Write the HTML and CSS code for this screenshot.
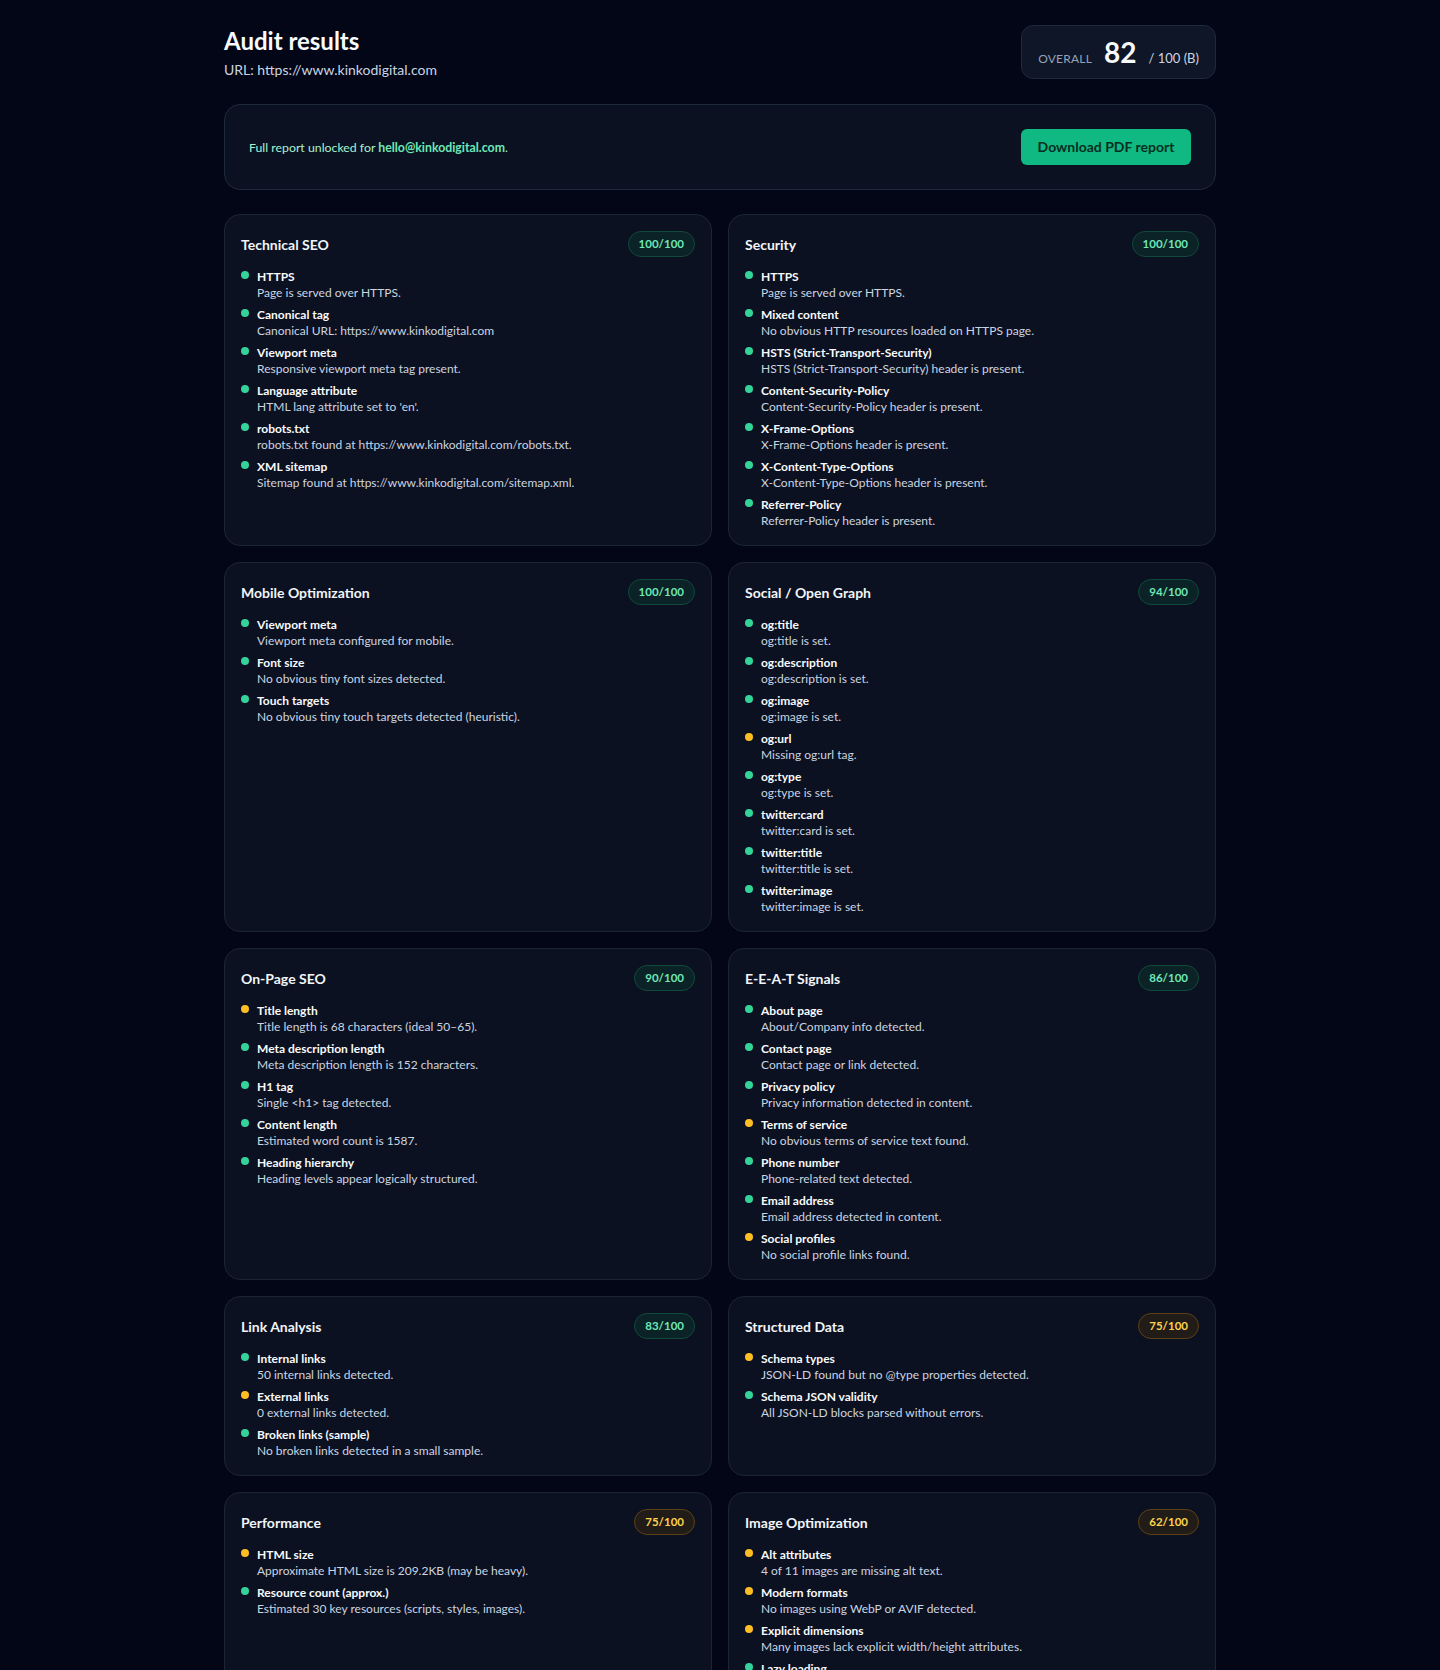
FILE: index.html
```html
<!DOCTYPE html>
<html lang="en">
<head>
<meta charset="utf-8">
<title>Audit results</title>
<link rel="stylesheet" href="styles.css">
</head>
<body>
<div class="page">
  <header class="top">
    <div class="top-text">
      <h1 class="h1">Audit results</h1>
      <p class="url">URL: https://www.kinkodigital.com</p>
    </div>
    <div class="overall">
      <span class="ov-label">OVERALL</span>
      <span class="ov-score">82</span>
      <span class="ov-max">/ 100 (B)</span>
    </div>
  </header>

  <section class="unlock">
    <p class="unlock-text">Full report unlocked for <strong class="unlock-email">hello@kinkodigital.com</strong>.</p>
    <button class="btn">Download PDF report</button>
  </section>

  <main class="grid">
    <article class="card">
      <div class="card-head"><h2 class="card-title">Technical SEO</h2><span class="badge good">100/100</span></div>
      <ul class="checks">
        <li class="check"><span class="dot ok"></span><div><div class="c-title">HTTPS</div><div class="c-desc">Page is served over HTTPS.</div></div></li>
        <li class="check"><span class="dot ok"></span><div><div class="c-title">Canonical tag</div><div class="c-desc">Canonical URL: https://www.kinkodigital.com</div></div></li>
        <li class="check"><span class="dot ok"></span><div><div class="c-title">Viewport meta</div><div class="c-desc">Responsive viewport meta tag present.</div></div></li>
        <li class="check"><span class="dot ok"></span><div><div class="c-title">Language attribute</div><div class="c-desc">HTML lang attribute set to 'en'.</div></div></li>
        <li class="check"><span class="dot ok"></span><div><div class="c-title">robots.txt</div><div class="c-desc">robots.txt found at https://www.kinkodigital.com/robots.txt.</div></div></li>
        <li class="check"><span class="dot ok"></span><div><div class="c-title">XML sitemap</div><div class="c-desc">Sitemap found at https://www.kinkodigital.com/sitemap.xml.</div></div></li>
      </ul>
    </article>

    <article class="card">
      <div class="card-head"><h2 class="card-title">Security</h2><span class="badge good">100/100</span></div>
      <ul class="checks">
        <li class="check"><span class="dot ok"></span><div><div class="c-title">HTTPS</div><div class="c-desc">Page is served over HTTPS.</div></div></li>
        <li class="check"><span class="dot ok"></span><div><div class="c-title">Mixed content</div><div class="c-desc">No obvious HTTP resources loaded on HTTPS page.</div></div></li>
        <li class="check"><span class="dot ok"></span><div><div class="c-title">HSTS (Strict-Transport-Security)</div><div class="c-desc">HSTS (Strict-Transport-Security) header is present.</div></div></li>
        <li class="check"><span class="dot ok"></span><div><div class="c-title">Content-Security-Policy</div><div class="c-desc">Content-Security-Policy header is present.</div></div></li>
        <li class="check"><span class="dot ok"></span><div><div class="c-title">X-Frame-Options</div><div class="c-desc">X-Frame-Options header is present.</div></div></li>
        <li class="check"><span class="dot ok"></span><div><div class="c-title">X-Content-Type-Options</div><div class="c-desc">X-Content-Type-Options header is present.</div></div></li>
        <li class="check"><span class="dot ok"></span><div><div class="c-title">Referrer-Policy</div><div class="c-desc">Referrer-Policy header is present.</div></div></li>
      </ul>
    </article>

    <article class="card">
      <div class="card-head"><h2 class="card-title">Mobile Optimization</h2><span class="badge good">100/100</span></div>
      <ul class="checks">
        <li class="check"><span class="dot ok"></span><div><div class="c-title">Viewport meta</div><div class="c-desc">Viewport meta configured for mobile.</div></div></li>
        <li class="check"><span class="dot ok"></span><div><div class="c-title">Font size</div><div class="c-desc">No obvious tiny font sizes detected.</div></div></li>
        <li class="check"><span class="dot ok"></span><div><div class="c-title">Touch targets</div><div class="c-desc">No obvious tiny touch targets detected (heuristic).</div></div></li>
      </ul>
    </article>

    <article class="card">
      <div class="card-head"><h2 class="card-title">Social / Open Graph</h2><span class="badge good">94/100</span></div>
      <ul class="checks">
        <li class="check"><span class="dot ok"></span><div><div class="c-title">og:title</div><div class="c-desc">og:title is set.</div></div></li>
        <li class="check"><span class="dot ok"></span><div><div class="c-title">og:description</div><div class="c-desc">og:description is set.</div></div></li>
        <li class="check"><span class="dot ok"></span><div><div class="c-title">og:image</div><div class="c-desc">og:image is set.</div></div></li>
        <li class="check"><span class="dot warn"></span><div><div class="c-title">og:url</div><div class="c-desc">Missing og:url tag.</div></div></li>
        <li class="check"><span class="dot ok"></span><div><div class="c-title">og:type</div><div class="c-desc">og:type is set.</div></div></li>
        <li class="check"><span class="dot ok"></span><div><div class="c-title">twitter:card</div><div class="c-desc">twitter:card is set.</div></div></li>
        <li class="check"><span class="dot ok"></span><div><div class="c-title">twitter:title</div><div class="c-desc">twitter:title is set.</div></div></li>
        <li class="check"><span class="dot ok"></span><div><div class="c-title">twitter:image</div><div class="c-desc">twitter:image is set.</div></div></li>
      </ul>
    </article>

    <article class="card">
      <div class="card-head"><h2 class="card-title">On-Page SEO</h2><span class="badge good">90/100</span></div>
      <ul class="checks">
        <li class="check"><span class="dot warn"></span><div><div class="c-title">Title length</div><div class="c-desc">Title length is 68 characters (ideal 50–65).</div></div></li>
        <li class="check"><span class="dot ok"></span><div><div class="c-title">Meta description length</div><div class="c-desc">Meta description length is 152 characters.</div></div></li>
        <li class="check"><span class="dot ok"></span><div><div class="c-title">H1 tag</div><div class="c-desc">Single &lt;h1&gt; tag detected.</div></div></li>
        <li class="check"><span class="dot ok"></span><div><div class="c-title">Content length</div><div class="c-desc">Estimated word count is 1587.</div></div></li>
        <li class="check"><span class="dot ok"></span><div><div class="c-title">Heading hierarchy</div><div class="c-desc">Heading levels appear logically structured.</div></div></li>
      </ul>
    </article>

    <article class="card">
      <div class="card-head"><h2 class="card-title">E-E-A-T Signals</h2><span class="badge good">86/100</span></div>
      <ul class="checks">
        <li class="check"><span class="dot ok"></span><div><div class="c-title">About page</div><div class="c-desc">About/Company info detected.</div></div></li>
        <li class="check"><span class="dot ok"></span><div><div class="c-title">Contact page</div><div class="c-desc">Contact page or link detected.</div></div></li>
        <li class="check"><span class="dot ok"></span><div><div class="c-title">Privacy policy</div><div class="c-desc">Privacy information detected in content.</div></div></li>
        <li class="check"><span class="dot warn"></span><div><div class="c-title">Terms of service</div><div class="c-desc">No obvious terms of service text found.</div></div></li>
        <li class="check"><span class="dot ok"></span><div><div class="c-title">Phone number</div><div class="c-desc">Phone-related text detected.</div></div></li>
        <li class="check"><span class="dot ok"></span><div><div class="c-title">Email address</div><div class="c-desc">Email address detected in content.</div></div></li>
        <li class="check"><span class="dot warn"></span><div><div class="c-title">Social profiles</div><div class="c-desc">No social profile links found.</div></div></li>
      </ul>
    </article>

    <article class="card">
      <div class="card-head"><h2 class="card-title">Link Analysis</h2><span class="badge good">83/100</span></div>
      <ul class="checks">
        <li class="check"><span class="dot ok"></span><div><div class="c-title">Internal links</div><div class="c-desc">50 internal links detected.</div></div></li>
        <li class="check"><span class="dot warn"></span><div><div class="c-title">External links</div><div class="c-desc">0 external links detected.</div></div></li>
        <li class="check"><span class="dot ok"></span><div><div class="c-title">Broken links (sample)</div><div class="c-desc">No broken links detected in a small sample.</div></div></li>
      </ul>
    </article>

    <article class="card">
      <div class="card-head"><h2 class="card-title">Structured Data</h2><span class="badge mid">75/100</span></div>
      <ul class="checks">
        <li class="check"><span class="dot warn"></span><div><div class="c-title">Schema types</div><div class="c-desc">JSON-LD found but no @type properties detected.</div></div></li>
        <li class="check"><span class="dot ok"></span><div><div class="c-title">Schema JSON validity</div><div class="c-desc">All JSON-LD blocks parsed without errors.</div></div></li>
      </ul>
    </article>

    <article class="card">
      <div class="card-head"><h2 class="card-title">Performance</h2><span class="badge mid">75/100</span></div>
      <ul class="checks">
        <li class="check"><span class="dot warn"></span><div><div class="c-title">HTML size</div><div class="c-desc">Approximate HTML size is 209.2KB (may be heavy).</div></div></li>
        <li class="check"><span class="dot ok"></span><div><div class="c-title">Resource count (approx.)</div><div class="c-desc">Estimated 30 key resources (scripts, styles, images).</div></div></li>
      </ul>
    </article>

    <article class="card">
      <div class="card-head"><h2 class="card-title">Image Optimization</h2><span class="badge mid">62/100</span></div>
      <ul class="checks">
        <li class="check"><span class="dot warn"></span><div><div class="c-title">Alt attributes</div><div class="c-desc">4 of 11 images are missing alt text.</div></div></li>
        <li class="check"><span class="dot warn"></span><div><div class="c-title">Modern formats</div><div class="c-desc">No images using WebP or AVIF detected.</div></div></li>
        <li class="check"><span class="dot warn"></span><div><div class="c-title">Explicit dimensions</div><div class="c-desc">Many images lack explicit width/height attributes.</div></div></li>
        <li class="check"><span class="dot ok"></span><div><div class="c-title">Lazy loading</div><div class="c-desc">Lazy loading is used on images.</div></div></li>
      </ul>
    </article>
  </main>
</div>
</body>
</html>
```

FILE: styles.css
```css
* { box-sizing: border-box; }
html, body { margin: 0; padding: 0; }
body {
  background: #020617;
  color: #e2e8f0;
  font-family: Lato, "Liberation Sans", sans-serif;
}
.page {
  width: 992px;
  margin: 0 auto;
  padding: 24px 0 48px;
}
.top {
  display: flex;
  justify-content: space-between;
  align-items: center;
}
.h1 {
  margin: 0;
  padding-top: 1px;
  font-size: 24px;
  line-height: 31px;
  font-weight: 700;
  color: #f8fafc;
}
.url {
  margin: 4px 0 0;
  font-size: 14px;
  line-height: 20px;
  color: #cbd5e1;
}
.overall {
  display: flex;
  align-items: baseline;
  gap: 12px;
  height: 54px;
  padding: 8px 16px;
  border: 1px solid #1e293b;
  border-radius: 12px;
  background: #0f1627;
}
.ov-label {
  font-size: 12px;
  letter-spacing: 0.2px;
  color: #94a3b8;
}
.ov-score {
  font-size: 28px;
  line-height: 36px;
  font-weight: 700;
  color: #f8fafc;
}
.ov-max {
  font-size: 13px;
  color: #cbd5e1;
}
.unlock {
  margin-top: 24px;
  display: flex;
  justify-content: space-between;
  align-items: center;
  padding: 24px;
  border: 1px solid #1e293b;
  border-radius: 16px;
  background: #0b1120;
}
.unlock-text {
  margin: 0;
  font-size: 12.3px;
  color: #a7f3d0;
}
.unlock-email {
  color: #6ee7b7;
  font-weight: 700;
}
.btn {
  font-family: inherit;
  font-size: 14px;
  line-height: 20px;
  font-weight: 700;
  color: #052e22;
  background: #10b981;
  border: 0;
  border-radius: 6px;
  padding: 8px 16px;
  min-width: 170px;
  white-space: nowrap;
}
.grid {
  margin-top: 24px;
  display: grid;
  grid-template-columns: 1fr 1fr;
  gap: 16px;
}
.card {
  padding: 16px;
  border: 1px solid #1c2536;
  border-radius: 16px;
  background: #0b1120;
}
.card-head {
  display: flex;
  justify-content: space-between;
  align-items: center;
  height: 26px;
}
.card-title {
  margin: 0;
  font-size: 14px;
  font-weight: 700;
  color: #f1f5f9;
}
.badge {
  font-size: 11.5px;
  line-height: 16px;
  font-weight: 700;
  padding: 4px 10px;
  border-radius: 999px;
  border: 1px solid;
}
.badge.good {
  color: #6ee7b7;
  background: #0b2226;
  border-color: #0f4a3b;
}
.badge.mid {
  color: #fcd34d;
  background: #211c17;
  border-color: #5c4116;
}
.checks {
  list-style: none;
  margin: 12px 0 0;
  padding: 0;
  display: flex;
  flex-direction: column;
  gap: 6px;
}
.check {
  display: flex;
  gap: 8px;
  align-items: flex-start;
}
.dot {
  flex: none;
  width: 8px;
  height: 8px;
  margin-top: 2px;
  border-radius: 50%;
}
.dot.ok { background: #34d399; }
.dot.warn { background: #fbbf24; }
.c-title {
  font-size: 12px;
  line-height: 16px;
  font-weight: 700;
  color: #f8fafc;
}
.c-desc {
  font-size: 12px;
  line-height: 16px;
  color: #cbd5e1;
}
```
